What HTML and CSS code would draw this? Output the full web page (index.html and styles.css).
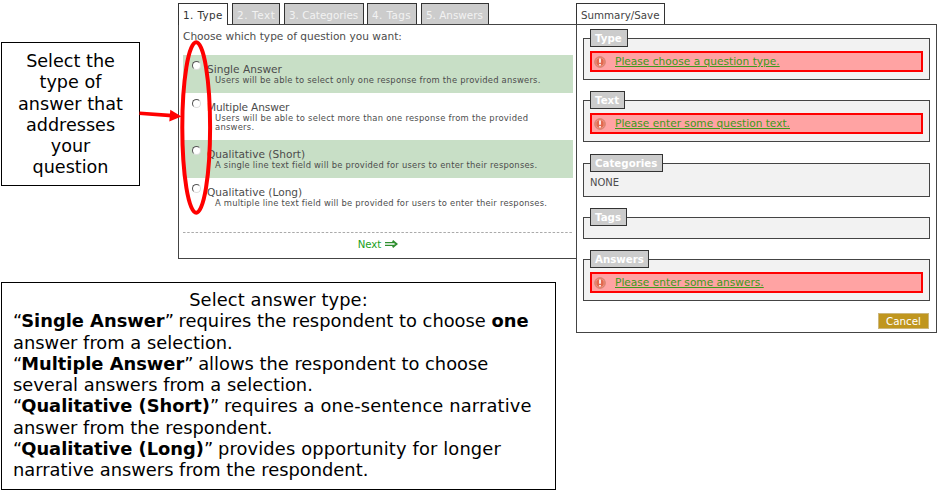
FILE: index.html
```html
<!DOCTYPE html>
<html lang="en">
<head>
<meta charset="utf-8">
<title>Question type</title>
<link rel="stylesheet" href="styles.css">
</head>
<body>
<div class="page">
  <div class="left">
    <div class="top">
      <aside class="callout">Select the<br>type of<br>answer that<br>addresses<br>your<br>question</aside>
      <section class="wizard">
        <nav class="tabs">
          <span class="tab active t1">1. Type</span><span class="tab t2">2. Text</span><span class="tab t3">3. Categories</span><span class="tab t4">4. Tags</span><span class="tab t5">5. Answers</span>
        </nav>
        <div class="panel">
          <p class="prompt">Choose which type of question you want:</p>
          <div class="option shaded"><i class="radio"></i><div><div class="title">Single Answer</div><div class="desc">Users will be able to select only one response from the provided answers.</div></div></div>
          <div class="option"><i class="radio"></i><div><div class="title tight">Multiple Answer</div><div class="desc wide">Users will be able to select more than one response from the provided<br>answers.</div></div></div>
          <div class="option shaded"><i class="radio"></i><div><div class="title">Qualitative (Short)</div><div class="desc">A single line text field will be provided for users to enter their responses.</div></div></div>
          <div class="option"><i class="radio"></i><div><div class="title">Qualitative (Long)</div><div class="desc">A multiple line text field will be provided for users to enter their responses.</div></div></div>
          <svg class="rule" width="390" height="1"><path d="M0 .5H390" stroke="#aaa" stroke-dasharray="2.5 1.7"/></svg>
          <div class="next"><span>Next</span><svg width="13" height="8" viewBox="0 0 13 8"><path d="M0 2.7H9.5M0 5.3H9.5" fill="none" stroke="#2f8f2f" stroke-width="1.2"/><path d="M7.6 .8L11.6 4L7.6 7.2" fill="none" stroke="#2f8f2f" stroke-width="1.8"/></svg></div>
        </div>
      </section>
    </div>
    <section class="note">
      <div class="heading">Select answer type:</div>
      <div><q>“</q><b>Single Answer</b><q>”</q> requires the respondent to choose <b>one</b><br>answer from a selection.</div>
      <div><q>“</q><b>Multiple Answer</b><q>”</q> allows the respondent to choose<br>several answers from a selection.</div>
      <div><q>“</q><b>Qualitative (Short)</b><q>”</q> <span class="loose">requires a one-sentence narrative</span><br>answer from the respondent.</div>
      <div><q>“</q><b>Qualitative (Long)</b><q>”</q> <span class="loose">provides opportunity for longer</span><br>narrative answers from the respondent.</div>
    </section>
  </div>
  <section class="summary">
    <nav class="tabs"><span class="tab open">Summary/Save</span></nav>
    <div class="panel">
      <div class="group alerted"><div class="legend l-type">Type</div><div class="alert"><svg class="warn" viewBox="0 0 12 12"><circle cx="6" cy="6" r="5.4" fill="#e2694f" stroke="#d98a7c"/><circle cx="6" cy="6" r="4.1" fill="none" stroke="#f0a595" stroke-width=".7"/><path d="M6 2.6V6.7M6 8V9.4" stroke="#fff" stroke-width="1.7"/></svg><a>Please choose a question type.</a></div></div>
      <div class="group alerted"><div class="legend l-text">Text</div><div class="alert"><svg class="warn" viewBox="0 0 12 12"><circle cx="6" cy="6" r="5.4" fill="#e2694f" stroke="#d98a7c"/><circle cx="6" cy="6" r="4.1" fill="none" stroke="#f0a595" stroke-width=".7"/><path d="M6 2.6V6.7M6 8V9.4" stroke="#fff" stroke-width="1.7"/></svg><a>Please enter some question text.</a></div></div>
      <div class="group cats"><div class="legend l-cats">Categories</div><div class="none">NONE</div></div>
      <div class="group tagset"><div class="legend l-tags">Tags</div></div>
      <div class="group alerted last"><div class="legend l-answers">Answers</div><div class="alert"><svg class="warn" viewBox="0 0 12 12"><circle cx="6" cy="6" r="5.4" fill="#e2694f" stroke="#d98a7c"/><circle cx="6" cy="6" r="4.1" fill="none" stroke="#f0a595" stroke-width=".7"/><path d="M6 2.6V6.7M6 8V9.4" stroke="#fff" stroke-width="1.7"/></svg><a>Please enter some answers.</a></div></div>
      <div class="actions"><span class="cancel">Cancel</span></div>
    </div>
  </section>
  <svg class="marks" width="220" height="220" viewBox="0 0 220 220">
    <ellipse cx="196.2" cy="127.5" rx="13.9" ry="85.2" fill="none" stroke="#f00" stroke-width="4"/>
    <path d="M139.5 113.2L172 115.6" stroke="#f00" stroke-width="3.6"/>
    <path d="M170.3 109.8L181.5 116.5L169.3 121.6Z" fill="#f00"/>
  </svg>
</div>
</body>
</html>
```
FILE: styles.css
```css
* { box-sizing: border-box; }
body { margin: 0; background: #fff; color: #4c4c4c; font: 10.6px/13px "DejaVu Sans", Verdana, sans-serif; white-space: nowrap; overflow: hidden; }
.page { position: relative; display: flex; width: 938px; height: 492px; }
.left { width: 576px; display: flex; flex-direction: column; }
.top { display: flex; height: 282px; }
.callout { width: 139px; height: 144px; margin: 42px 38px 0 1px; padding-top: 8px; border: 1px solid #000; text-align: center; color: #000; font-size: 17.6px; line-height: 21.3px; }
.wizard { width: 398px; flex: none; padding-top: 3px; }
.tabs { display: flex; height: 21px; }
.tab { height: 21px; padding: 5px 0 0 4px; border: 1px solid #333; border-bottom: 0; background: #ccc; color: #f2f2f2; font-size: 10.4px; }
.tab.active { height: 22px; background: #fff; color: #333; letter-spacing: .4px; position: relative; }
.t1 { width: 50px; }
.t2 { width: 48px; margin-left: 4px; letter-spacing: .6px; }
.t3 { width: 80px; margin-left: 4px; }
.t4 { width: 50px; margin-left: 3px; letter-spacing: .4px; }
.t5 { width: 68px; margin-left: 4px; }
.tab.open { width: 89px; background: #fff; color: #444; font-size: 10.3px; }
.panel { border: 1px solid #444; }
.wizard .panel { height: 235px; border-right: 0; padding: 4.5px 3px 0 4px; }
.prompt { margin: 0 0 12.3px; }
.option { display: flex; padding: 8.5px 0 6.9px 9px; }
.shaded { background: #c8dfc6; }
.radio { width: 9px; height: 9px; margin: -2px 6px 0 0; border-radius: 50%; background: #fff; border: 1px solid #ddd; border-top-color: #555; border-left-color: #555; }
.title { line-height: 12.8px; }
.tight { letter-spacing: -.15px; }
.desc { padding-left: 8px; font-size: 8.4px; line-height: 9.6px; letter-spacing: .22px; }
.desc.wide { letter-spacing: .26px; }
.rule { display: block; margin-top: 16px; }
.next { display: flex; justify-content: center; align-items: center; gap: 4px; margin-top: 5px; color: #1aa01a; font-size: 10.2px; }
.note { width: 555px; height: 208px; margin-left: 1px; padding: 6px 11px 0; border: 1px solid #000; color: #000; font-size: 17.85px; line-height: 21.25px; }
.heading { text-align: center; letter-spacing: .1px; }
.loose { letter-spacing: .14px; }
q { quotes: none; letter-spacing: -1px; }
.summary { width: 361px; padding-top: 3px; }
.summary .panel { height: 309px; padding: 13px 6px 0; }
.group { height: 42px; margin-bottom: 20px; padding-left: 6px; padding-right: 6px; border: 1px solid #444; background: #f2f2f2; }
.legend { height: 18px; margin-top: -10px; padding: 2px 0 0 4px; border: 1px solid #333; background: #ccc; color: #fff; font-weight: bold; font-size: 10.25px; }
.l-type { width: 38px; }
.l-text { width: 35px; }
.l-cats { width: 73px; }
.l-tags { width: 37px; }
.l-answers { width: 59px; }
.alert { display: flex; align-items: center; height: 21px; margin-top: 4px; padding-left: 2px; border: 2px solid #f00; background: #ffa3a3; }
.warn { width: 12px; height: 12px; margin-right: 9px; }
.alert a { color: #3c9a1c; text-decoration: underline; }
.cats { height: 34px; margin-bottom: 20px; margin-top: 21px; }
.none { margin-top: 4px; font-size: 10px; }
.tagset { height: 22px; }
.last { margin-bottom: 12px; }
.actions { display: flex; justify-content: flex-end; padding-right: 1px; }
.cancel { width: 51px; height: 16px; padding-top: 1px; text-align: center; background: #c0961e; color: #fff; border: 1px solid #cdb77c; font-size: 10.3px; line-height: 13px; }
.marks { position: absolute; left: 0; top: 0; }
```
